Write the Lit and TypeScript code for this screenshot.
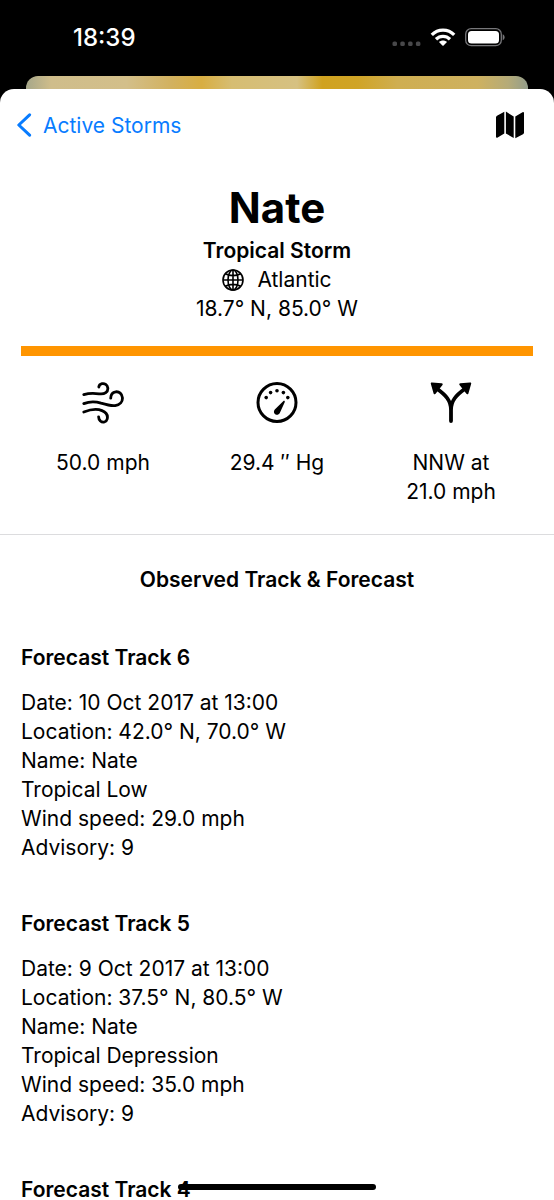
import { LitElement, html, css, svg, nothing } from "lit";
import { customElement, property } from "lit/decorators.js";

interface Track {
  id: number;
  details: string[];
}

const tracks: Track[] = [
  {
    id: 6,
    details: ["Date: 10 Oct 2017 at 13:00", "Location: 42.0° N, 70.0° W", "Name: Nate", "Tropical Low", "Wind speed: 29.0 mph", "Advisory: 9"],
  },
  {
    id: 5,
    details: ["Date: 9 Oct 2017 at 13:00", "Location: 37.5° N, 80.5° W", "Name: Nate", "Tropical Depression", "Wind speed: 35.0 mph", "Advisory: 9"],
  },
  { id: 4, details: [] },
];

const windIcon = svg`
  <g fill="none" stroke="currentColor" stroke-width="2.8" stroke-linecap="round" stroke-linejoin="round">
    <path d="M1.800 12.600 C7 11 12 11 17 11.800 C23 12.600 26.200 9.800 25.800 6 C25.400 2.800 22.600 1.100 20 1.700 C18 2.200 17 3.500 16.800 5"/>
    <path d="M1.800 21.600 C8 19.200 13.600 19.400 19 21.200 C25 23 29 24.200 33.200 23.600 C38 22.800 40.800 19.600 40.400 15.600 C40 11.800 37.200 9.400 33.800 9.800 C30.600 10.200 28.800 12.600 28.700 16.200"/>
    <path d="M1.800 30 C8 27.600 15.600 26.800 20 28.600 C24.400 30.400 26 33.600 25.200 37 C24.400 40.200 20.800 41.200 18.400 39 C17.200 37.800 16.600 36.400 16.600 34.800"/>
  </g>`;

const gaugeIcon = svg`
  <circle cx="21" cy="20.500" r="19" fill="none" stroke="currentColor" stroke-width="3"/>
  <g fill="currentColor">
    <circle cx="10.2" cy="15.6" r="1.8"/>
    <circle cx="14.6" cy="10.6" r="1.8"/>
    <circle cx="21" cy="8.7" r="1.8"/>
    <circle cx="27.4" cy="10.6" r="1.8"/>
    <circle cx="31.8" cy="15.6" r="1.8"/>
    <path d="M28.7 20.2 L23.8 31 C22.8 33 20.6 33.200 19.200 32.200 C17.600 31 17.500 28.900 18.800 27.500 L27.200 19.200 C28.200 18.400 29.200 19.100 28.700 20.200 Z"/>
  </g>`;

const forkIcon = svg`
  <path d="M21 39 V28 C21 18.500 15.500 13 8 7.500 M21 28 C21 18.500 26.500 13 34 7.500" fill="none" stroke="currentColor" stroke-width="3.800" stroke-linecap="round"/>
  <path d="M2 .4 L11.600 1.200 C12.900 1.400 13 2.400 12.300 3.300 L5.600 11.800 C4.900 12.600 3.900 12.400 3.600 11.400 L.8 1.800 C.6 .9 1.100 .4 2 .4 Z M40 .4 L30.400 1.200 C29.100 1.400 29 2.400 29.700 3.300 L36.400 11.800 C37.100 12.600 38.100 12.400 38.400 11.400 L41.200 1.800 C41.400 .9 40.900 .4 40 .4 Z" fill="currentColor"/>`;

@customElement("status-bar")
class StatusBar extends LitElement {
  static styles = css`
    :host { display: flex; justify-content: space-between; align-items: center; height: 76px; padding: 0 49px 0 73px; color: #fff; }
    .time { font-size: 24px; line-height: 28px; font-weight: 500; }
    .signals { display: flex; align-items: center; gap: 9px; }
    svg { display: block; }
  `;
  render() {
    return html`
      <span class="time">18:39</span>
      <div class="signals">
        <svg width="29" height="20" viewBox="0 0 29 20" aria-label="No signal">
          <g fill="#48484a">
            <rect x="0.500" y="13.500" width="4.500" height="4.500" rx="1.600"/><rect x="8.300" y="13.500" width="4.500" height="4.500" rx="1.600"/>
            <rect x="16.100" y="13.500" width="4.500" height="4.500" rx="1.600"/><rect x="23.900" y="13.500" width="4.500" height="4.500" rx="1.600"/>
          </g>
        </svg>
        <svg width="26" height="20" viewBox="0 0 26 20" aria-label="Wi-Fi">
          <g fill="none" stroke="#fff" stroke-width="3.300">
            <path d="M1.800 6.900 C8 .6 18 .6 24.200 6.900"/>
            <path d="M6 11.300 C10 7.400 16 7.400 20 11.300"/>
          </g>
          <path d="M9 14 C11.300 12 14.700 12 17 14 L13.600 17.400 Q13 18 12.400 17.400 Z" fill="#fff"/>
        </svg>
        <svg width="40" height="20" viewBox="0 0 40 20" aria-label="Battery full">
          <rect x=".7" y=".7" width="35.600" height="17" rx="5.500" fill="none" stroke="#77777a" stroke-width="1.300"/>
          <rect x="3" y="3" width="31" height="12.500" rx="3.500" fill="#fff"/>
          <path d="M37.700 6.300 C40.200 7.300 40.200 11.300 37.700 12.300 Z" fill="#77777a"/>
        </svg>
      </div>
    `;
  }
}

@customElement("storm-metric")
class StormMetric extends LitElement {
  @property({ attribute: false }) icon: unknown;
  @property({ attribute: false }) lines: string[] = [];
  static styles = css`
    :host { display: flex; flex-direction: column; align-items: center; gap: 24px; text-align: center; }
    svg { display: block; }
    .line { display: block; }
  `;
  render() {
    return html`
      <svg width="42" height="42" viewBox="0 0 42 42" aria-hidden="true">${this.icon}</svg>
      <div>${this.lines.map((l) => html`<span class="line">${l}</span>`)}</div>
    `;
  }
}

@customElement("forecast-track")
class ForecastTrack extends LitElement {
  @property({ attribute: false }) track!: Track;
  static styles = css`
    :host { display: block; }
    h3 { margin: 0; font-size: 21px; line-height: 21px; font-weight: 600; }
    .details { margin-top: 20px; }
    p { margin: 0; }
  `;
  render() {
    const { id, details } = this.track;
    return html`
      <h3>Forecast Track ${id}</h3>
      ${details.length ? html`<div class="details">${details.map((d) => html`<p>${d}</p>`)}</div>` : nothing}
    `;
  }
}

@customElement("app-root")
class AppRoot extends LitElement {
  static styles = css`
    :host {
      display: flex; flex-direction: column; position: relative; height: 100vh; overflow: hidden;
      background: #000; color: #000;
      font-family: Inter, "Liberation Sans", sans-serif; font-size: 21px; line-height: 29px;
    }
    status-bar { flex: none; }
    .peek {
      flex: none; height: 30px; margin: 0 26px -17px; border-radius: 12px 12px 0 0;
      background: linear-gradient(90deg, #a6a78a 0, #cfbd8b 5%, #d3bf8a 20%, #d2b15f 29%, #d8ae42 35%, #d6bd72 41%, #d6c182 54%, #d0a21f 59%, #d0a426 66%, #cfae51 74%, #ceb160 90%, #b5ab78 96%, #939d8b 100%);
    }
    .sheet { position: relative; flex: 1; min-height: 0; overflow: hidden; background: #fff; border-radius: 14px 14px 0 0; }
    nav { display: flex; justify-content: space-between; align-items: center; height: 72px; padding: 0 29px 0 16px; }
    .back { display: flex; align-items: center; gap: 11px; color: #087cff; text-decoration: none; }
    .map { border: 0; padding: 0; background: none; color: #000; }
    svg { display: block; }
    .summary { display: flex; flex-direction: column; align-items: center; padding: 21px 21px 0; text-align: center; }
    h1 { margin: 0 0 2px; font-size: 42px; line-height: 52px; font-weight: 700; }
    h2 { margin: 0; font-size: 21px; line-height: 29px; font-weight: 600; }
    .basin { display: flex; align-items: center; gap: 13px; }
    .category { height: 10px; margin: 23px 21px 0; background: #ff9500; }
    .metrics { display: grid; grid-template-columns: repeat(3, 1fr); gap: 10px; padding: 26px 21px 28px; border-bottom: 1px solid #dcdcde; }
    .heading { padding: 30px 21px 53px; text-align: center; }
    .tracks { display: flex; flex-direction: column; gap: 51px; padding: 0 21px; }
    .home { position: absolute; left: 50%; bottom: 10px; width: 198px; height: 6px; margin-left: -99px; border-radius: 3px; background: #000; }
  `;
  render() {
    return html`
      <status-bar></status-bar>
      <div class="peek"></div>
      <main class="sheet">
        <nav>
          <a class="back" href="#storms">
            <svg width="16" height="24" viewBox="0 0 16 24" aria-hidden="true">
              <path d="M13.600 1.800 L2.800 12 L13.600 22.200" fill="none" stroke="currentColor" stroke-width="3" stroke-linecap="round" stroke-linejoin="round"/>
            </svg>
            <span>Active Storms</span>
          </a>
          <button class="map" type="button" aria-label="Map">
            <svg width="30" height="28" viewBox="0 0 30 28" aria-hidden="true">
              <path d="M1 6.500 Q1 5.400 2 4.800 L9.300 .8 V22.400 L2.700 26.600 Q1 27.300 1 25.700 Z M10.900 .6 L18.700 5.500 V27.100 L10.900 22.400 Z M20.300 5.500 L27.500 1.200 Q29 .6 29 2.200 V21.500 Q29 22.600 28 23.200 L20.300 27.200 Z" fill="currentColor"/>
            </svg>
          </button>
        </nav>
        <header class="summary">
          <h1>Nate</h1>
          <h2>Tropical Storm</h2>
          <div class="basin">
            <svg width="22" height="22" viewBox="0 0 22 22" aria-hidden="true">
              <g fill="none" stroke="currentColor" stroke-width="1.600">
                <circle cx="11" cy="11" r="10"/>
                <ellipse cx="11" cy="11" rx="5" ry="10"/>
                <path d="M11 1 V21 M1 11 H21 M3.400 4.800 C7.500 7.200 14.500 7.200 18.600 4.800 M3.400 17.200 C7.500 14.800 14.500 14.800 18.600 17.200"/>
              </g>
            </svg>
            <span>Atlantic</span>
          </div>
          <div>18.7° N, 85.0° W</div>
        </header>
        <div class="category"></div>
        <section class="metrics">
          <storm-metric .icon=${windIcon} .lines=${["50.0 mph"]}></storm-metric>
          <storm-metric .icon=${gaugeIcon} .lines=${["29.4 ″ Hg"]}></storm-metric>
          <storm-metric .icon=${forkIcon} .lines=${["NNW at", "21.0 mph"]}></storm-metric>
        </section>
        <h2 class="heading">Observed Track &amp; Forecast</h2>
        <section class="tracks">
          ${tracks.map((t) => html`<forecast-track .track=${t}></forecast-track>`)}
        </section>
      </main>
      <div class="home"></div>
    `;
  }
}
